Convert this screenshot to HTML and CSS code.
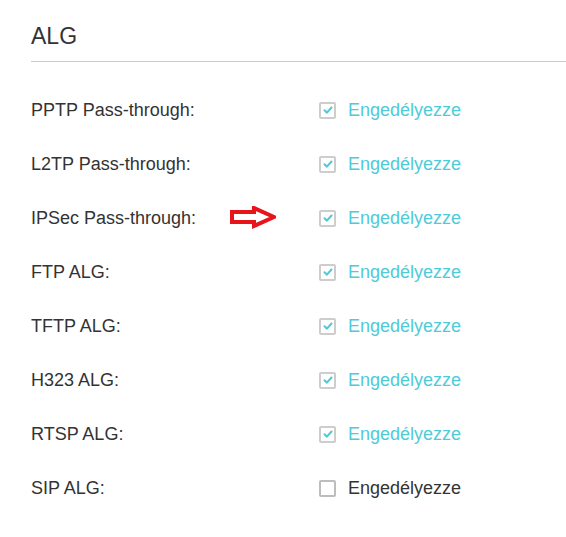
FILE: index.html
```html
<!DOCTYPE html>
<html>
<head>
<meta charset="utf-8">
<link rel="stylesheet" href="styles.css">
</head>
<body>
<div class="panel">
  <h2 class="title">ALG</h2>
  <div class="rows">
    <div class="row"><span class="label">PPTP Pass-through:</span><label class="opt on"><span class="box"><svg viewBox="0 0 16 16"><path d="M4 8.3 L6.8 11 L12 5.2"/></svg></span>Engedélyezze</label></div>
    <div class="row"><span class="label">L2TP Pass-through:</span><label class="opt on"><span class="box"><svg viewBox="0 0 16 16"><path d="M4 8.3 L6.8 11 L12 5.2"/></svg></span>Engedélyezze</label></div>
    <div class="row"><span class="label">IPSec Pass-through:</span>
      <svg class="arrow" viewBox="0 0 50 26"><path d="M6 6 H28 V2 L48 11 L28 20 V16 H6 Z"/></svg>
      <label class="opt on"><span class="box"><svg viewBox="0 0 16 16"><path d="M4 8.3 L6.8 11 L12 5.2"/></svg></span>Engedélyezze</label></div>
    <div class="row"><span class="label">FTP ALG:</span><label class="opt on"><span class="box"><svg viewBox="0 0 16 16"><path d="M4 8.3 L6.8 11 L12 5.2"/></svg></span>Engedélyezze</label></div>
    <div class="row"><span class="label">TFTP ALG:</span><label class="opt on"><span class="box"><svg viewBox="0 0 16 16"><path d="M4 8.3 L6.8 11 L12 5.2"/></svg></span>Engedélyezze</label></div>
    <div class="row"><span class="label">H323 ALG:</span><label class="opt on"><span class="box"><svg viewBox="0 0 16 16"><path d="M4 8.3 L6.8 11 L12 5.2"/></svg></span>Engedélyezze</label></div>
    <div class="row"><span class="label">RTSP ALG:</span><label class="opt on"><span class="box"><svg viewBox="0 0 16 16"><path d="M4 8.3 L6.8 11 L12 5.2"/></svg></span>Engedélyezze</label></div>
    <div class="row"><span class="label">SIP ALG:</span><label class="opt"><span class="box"></span>Engedélyezze</label></div>
  </div>
</div>
</body>
</html>
```
FILE: styles.css
```css
html, body { margin: 0; padding: 0; background: #fff; }
body { font-family: "Liberation Sans", Arial, sans-serif; color: #333; }
.panel { padding: 0 0 0 31px; }
.title {
  margin: 0;
  padding-top: 23px;
  padding-bottom: 11px;
  font-size: 23px;
  font-weight: normal;
  line-height: 27px;
  color: #333;
  border-bottom: 1px solid #ccc;
}
.rows { padding-top: 35px; }
.row {
  position: relative;
  display: flex;
  align-items: center;
  height: 26px;
  margin-bottom: 28px;
  font-size: 18px;
}
.label { width: 288px; }
.opt { display: flex; align-items: center; color: #333; }
.opt.on { color: #4ecbd8; }
.box {
  width: 13px; height: 13px;
  border: 2px solid #bdbdbd;
  border-radius: 2px;
  margin-right: 12px;
  display: flex; align-items: center; justify-content: center;
  box-sizing: content-box;
}
.opt.on .box { border-color: #cdcdcd; }
.box svg { width: 14px; height: 14px; flex: none; fill: none; stroke: #4ecbd8; stroke-width: 2.4; stroke-linecap: round; stroke-linejoin: round; }
.arrow {
  position: absolute;
  left: 195px; top: 1px;
  width: 50px; height: 26px;
  fill: #fff; stroke: #e8141b; stroke-width: 4;
}
```
